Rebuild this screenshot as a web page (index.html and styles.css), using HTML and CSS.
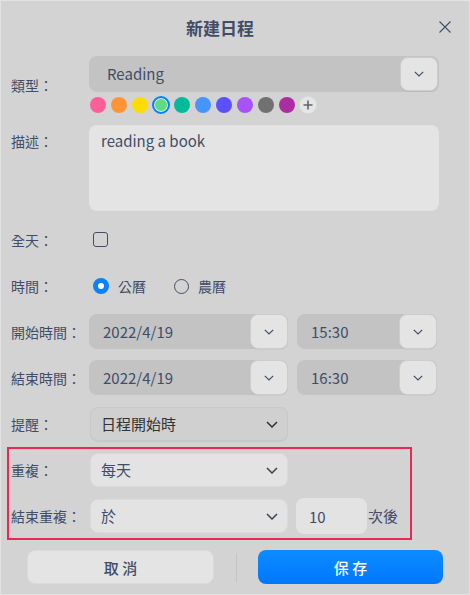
FILE: index.html
```html
<!DOCTYPE html>
<html lang="zh-Hant">
<head>
<meta charset="utf-8">
<title>新建日程</title>
<link rel="stylesheet" href="styles.css">
</head>
<body>
<div class="window">
  <header class="titlebar">
    <h1 class="title">新建日程</h1>
    <button class="close" aria-label="關閉">
      <svg width="12" height="12" viewBox="0 0 12 12"><path d="M0.5 0.5 L11.5 11.5 M11.5 0.5 L0.5 11.5" stroke="#414d68" stroke-width="1.1" fill="none"/></svg>
    </button>
  </header>

  <div class="form">
    <div class="row row-type">
      <span class="lbl">類型：</span>
      <div class="field-col">
        <div class="combo combo-type">
          <span class="combo-text">Reading</span>
          <span class="arrow-btn arrow-btn-inset">
            <svg width="10" height="6" viewBox="0 0 10 6"><path d="M0.8 0.8 L5 5 L9.2 0.8" stroke="#414d68" stroke-width="1.2" fill="none"/></svg>
          </span>
        </div>
        <div class="swatches">
          <span class="dot" style="background:#ff5f98"></span>
          <span class="dot" style="background:#ff9436"></span>
          <span class="dot" style="background:#ffdc00"></span>
          <span class="dot dot-selected" style="background:#5ddd82"></span>
          <span class="dot" style="background:#00bb9a"></span>
          <span class="dot" style="background:#4495ff"></span>
          <span class="dot" style="background:#5b50ff"></span>
          <span class="dot" style="background:#a851ff"></span>
          <span class="dot" style="background:#717171"></span>
          <span class="dot" style="background:#ac2ca2"></span>
          <span class="dot dot-add">
            <svg width="10" height="10" viewBox="0 0 10 10"><path d="M5 0.5 V9.5 M0.5 5 H9.5" stroke="#5f6470" stroke-width="1.6" fill="none"/></svg>
          </span>
        </div>
      </div>
    </div>

    <div class="row row-desc">
      <span class="lbl lbl-top">描述：</span>
      <div class="textarea">reading a book</div>
    </div>

    <div class="row">
      <span class="lbl">全天：</span>
      <div class="inline"><span class="checkbox"></span></div>
    </div>

    <div class="row">
      <span class="lbl">時間：</span>
      <div class="inline radios">
        <span class="radio radio-on"></span><span class="opt">公曆</span>
        <span class="radio radio-off"></span><span class="opt">農曆</span>
      </div>
    </div>

    <div class="row">
      <span class="lbl">開始時間：</span>
      <div class="inline pair">
        <div class="combo combo-date">
          <span class="combo-text">2022/4/19</span>
          <span class="arrow-btn"><svg width="10" height="6" viewBox="0 0 10 6"><path d="M0.8 0.8 L5 5 L9.2 0.8" stroke="#414d68" stroke-width="1.2" fill="none"/></svg></span>
        </div>
        <div class="combo combo-time">
          <span class="combo-text">15:30</span>
          <span class="arrow-btn"><svg width="10" height="6" viewBox="0 0 10 6"><path d="M0.8 0.8 L5 5 L9.2 0.8" stroke="#414d68" stroke-width="1.2" fill="none"/></svg></span>
        </div>
      </div>
    </div>

    <div class="row">
      <span class="lbl">結束時間：</span>
      <div class="inline pair">
        <div class="combo combo-date">
          <span class="combo-text">2022/4/19</span>
          <span class="arrow-btn"><svg width="10" height="6" viewBox="0 0 10 6"><path d="M0.8 0.8 L5 5 L9.2 0.8" stroke="#414d68" stroke-width="1.2" fill="none"/></svg></span>
        </div>
        <div class="combo combo-time">
          <span class="combo-text">16:30</span>
          <span class="arrow-btn"><svg width="10" height="6" viewBox="0 0 10 6"><path d="M0.8 0.8 L5 5 L9.2 0.8" stroke="#414d68" stroke-width="1.2" fill="none"/></svg></span>
        </div>
      </div>
    </div>

    <div class="row">
      <span class="lbl">提醒：</span>
      <div class="inline">
        <div class="select select-flat">
          <span class="select-text">日程開始時</span>
          <svg width="12" height="7" viewBox="0 0 12 7"><path d="M1 1 L6 6 L11 1" stroke="#303030" stroke-width="1.5" fill="none"/></svg>
        </div>
      </div>
    </div>

    <div class="repeat-box">
      <div class="row">
        <span class="lbl">重複：</span>
        <div class="inline">
          <div class="select select-light">
            <span class="select-text">每天</span>
            <svg width="12" height="7" viewBox="0 0 12 7"><path d="M1 1 L6 6 L11 1" stroke="#3a4256" stroke-width="1.5" fill="none"/></svg>
          </div>
        </div>
      </div>
      <div class="row">
        <span class="lbl">結束重複：</span>
        <div class="inline">
          <div class="select select-light">
            <span class="select-text">於</span>
            <svg width="12" height="7" viewBox="0 0 12 7"><path d="M1 1 L6 6 L11 1" stroke="#3a4256" stroke-width="1.5" fill="none"/></svg>
          </div>
          <div class="count">10</div>
          <span class="suffix">次後</span>
        </div>
      </div>
    </div>
  </div>

  <footer class="actions">
    <button class="btn btn-cancel">取 消</button>
    <span class="divider"></span>
    <button class="btn btn-save">保 存</button>
  </footer>
</div>
</body>
</html>
```

FILE: styles.css
```css
* { box-sizing: border-box; }

html, body {
  margin: 0;
  padding: 0;
}

body {
  width: 470px;
  height: 595px;
  background: #d3d3d3;
  font-family: "Noto Sans CJK TC", "Noto Sans", sans-serif;
  color: #414d68;
}

.window {
  width: 470px;
  height: 595px;
  background: #d3d3d3;
  box-shadow: inset 0 0 0 1px #e2e2e2;
  display: flex;
  flex-direction: column;
}

/* title bar */
.titlebar {
  height: 56px;
  display: flex;
  align-items: center;
  padding-left: 20px;
}

.title {
  flex: 1;
  margin: 0;
  text-align: center;
  font-size: 17px;
  font-weight: 700;
  color: #414d68;
  line-height: 24px;
}

.close {
  width: 50px;
  height: 50px;
  border: 0;
  padding: 0;
  background: transparent;
  display: flex;
  align-items: center;
  justify-content: center;
  margin-top: -3px;
}

/* form */
.form {
  padding: 0 11px;
  display: flex;
  flex-direction: column;
  gap: 12px;
}

.row {
  display: grid;
  grid-template-columns: 78px 1fr;
  align-items: center;
  min-height: 34px;
}

.lbl {
  font-size: 14px;
  line-height: 20px;
  white-space: nowrap;
  color: #414d68;
}

.lbl-top {
  align-self: start;
  padding-top: 6px;
}

.field-col {
  display: flex;
  flex-direction: column;
  gap: 5px;
}

.inline {
  display: flex;
  align-items: center;
  height: 34px;
}

/* combos */
.combo {
  display: flex;
  align-items: center;
  background: #c3c3c3;
  border-radius: 8px;
  font-size: 15px;
  color: #414d68;
}

.combo-type {
  width: 350px;
  height: 36px;
  padding: 1px;
}

.combo-type .combo-text {
  padding-left: 17px;
}

.combo-text {
  flex: 1;
  line-height: 20px;
}

.combo-date {
  width: 199px;
  height: 35px;
  margin-top: -1px;
}

.combo-time {
  width: 140px;
  height: 35px;
  margin-left: 9px;
  margin-top: -1px;
}

.combo-date .combo-text,
.combo-time .combo-text {
  padding-left: 14px;
}

.arrow-btn {
  width: 38px;
  height: 35px;
  background: #e4e4e4;
  border: 1px solid #cdcdcd;
  border-radius: 8px;
  display: flex;
  align-items: center;
  justify-content: center;
  box-shadow: 0 1px 1px rgba(0, 0, 0, 0.04);
}

.arrow-btn-inset {
  height: 34px;
}

/* swatches */
.swatches {
  display: flex;
  gap: 5px;
  padding-left: 1px;
  height: 16px;
  align-items: center;
}

.dot {
  width: 16px;
  height: 16px;
  border-radius: 50%;
  flex: none;
  display: flex;
  align-items: center;
  justify-content: center;
}

.dot-selected {
  width: 18px;
  height: 18px;
  margin: 0 -1px;
  border: 2px solid #0a7fff;
  box-shadow: inset 0 0 0 1px #e8e8e8;
}

.dot-add {
  background: #e6e6e6;
  box-shadow: 0 0 0 1px #dcdcdc;
}

/* textarea */
.textarea {
  height: 86px;
  width: 350px;
  background: #e4e4e4;
  border-radius: 8px;
  padding: 6px 12px;
  font-size: 15px;
  line-height: 20px;
  color: #414d68;
}

/* checkbox */
.checkbox {
  width: 15px;
  height: 15px;
  margin-left: 4px;
  margin-top: -1px;
  border: 1.5px solid #414d68;
  border-radius: 3px;
}

/* radios */
.radios .radio {
  width: 16px;
  height: 16px;
  border-radius: 50%;
  flex: none;
}

.radio-on {
  margin-left: 4px;
  border: 5px solid #0a81ff;
  background: #ffffff;
}

.radio-off {
  margin-left: 28px;
  width: 15px !important;
  height: 15px !important;
  border: 1px solid #414d68;
}

.opt {
  margin-left: 9px;
  font-size: 14px;
  line-height: 20px;
}

/* selects */
.select {
  width: 198px;
  height: 34px;
  margin-left: 1px;
  border-radius: 8px;
  display: flex;
  align-items: center;
  padding: 0 9px 0 10px;
  font-size: 15px;
}

.select-text {
  flex: 1;
  line-height: 20px;
}

.select-flat {
  background: #d0d0d0;
  border: 1px solid #c8c8c8;
  box-shadow: 0 1px 1px rgba(0, 0, 0, 0.05);
  color: #333333;
}

.select-light {
  background: #e3e3e3;
  border: 1px solid #dadada;
  color: #414d68;
}

.count {
  width: 71px;
  height: 36px;
  margin-left: 8px;
  background: #e3e3e3;
  border-radius: 8px;
  padding-left: 13px;
  display: flex;
  align-items: center;
  font-size: 15px;
}

.suffix {
  font-size: 15px;
  line-height: 20px;
  margin-left: 1px;
}

/* repeat highlight box */
.repeat-box {
  margin: -6px 0 0 -4px;
  width: 405px;
  border: 2px solid #ee2653;
  padding: 4px 2px 5px;
  display: flex;
  flex-direction: column;
  gap: 12px;
}

/* footer */
.actions {
  margin-top: 10px;
  padding: 0 27px;
  display: flex;
  align-items: center;
  height: 34px;
}

.btn {
  flex: 1;
  height: 34px;
  border-radius: 8px;
  border: 0;
  font-family: "Noto Sans CJK TC", "Noto Sans", sans-serif;
  font-size: 15px;
  font-weight: 500;
  padding: 0;
}

.btn-cancel {
  background: #e4e4e4;
  color: #414d68;
  border: 1px solid #dadada;
}

.btn-save {
  background: linear-gradient(#0d8cff, #0077ff);
  color: #ffffff;
}

.divider {
  width: 1px;
  height: 29px;
  background: #c4c4c4;
  margin: 0 21px 0 22px;
}
```
